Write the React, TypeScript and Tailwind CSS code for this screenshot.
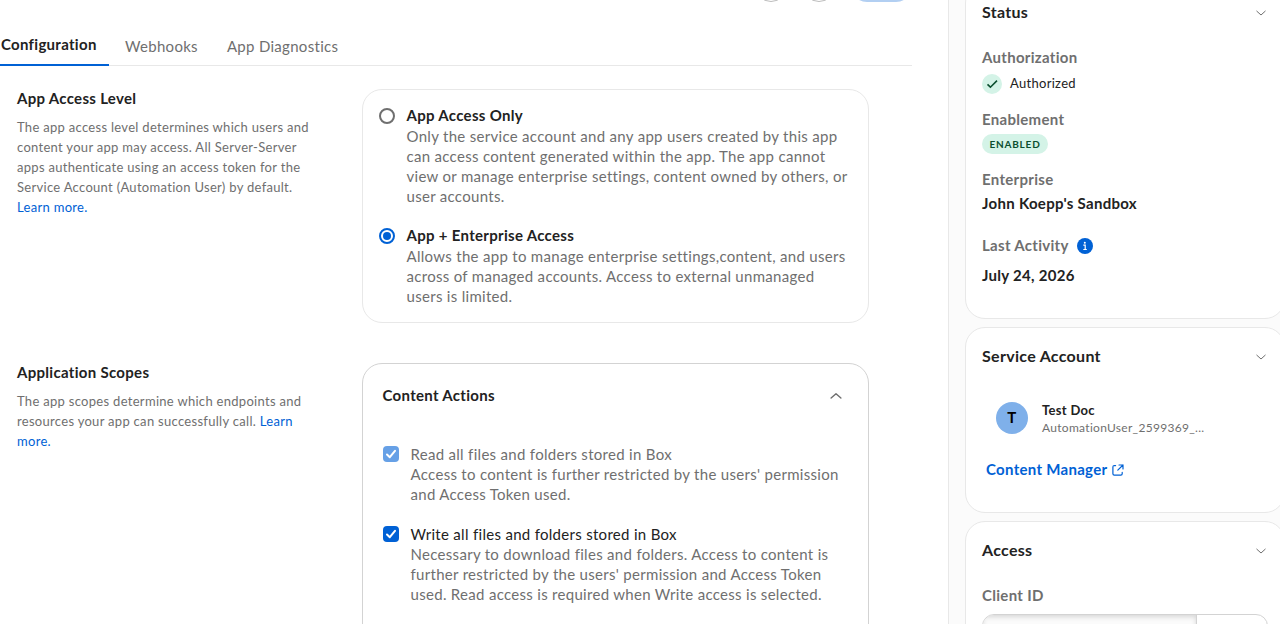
import type { ReactNode } from 'react'

const ACCESS_LEVELS = [
  {
    title: 'App Access Only',
    selected: false,
    text: 'Only the service account and any app users created by this app can access content generated within the app. The app cannot view or manage enterprise settings, content owned by others, or user accounts.',
  },
  {
    title: 'App + Enterprise Access',
    selected: true,
    text: 'Allows the app to manage enterprise settings,content, and users across of managed accounts. Access to external unmanaged users is limited.',
  },
]

const SCOPES = [
  {
    title: 'Read all files and folders stored in Box',
    disabled: true,
    text: "Access to content is further restricted by the users' permission and Access Token used.",
  },
  {
    title: 'Write all files and folders stored in Box',
    disabled: false,
    text: "Necessary to download files and folders. Access to content is further restricted by the users' permission and Access Token used. Read access is required when Write access is selected.",
  },
]

// Chevron used by the collapsible sections
function Chevron({ className = '' }: { className?: string }) {
  return (
    <svg className={className} viewBox="0 0 12 12" fill="none" stroke="currentColor" strokeLinecap="round" strokeLinejoin="round">
      <path d="M1.8 4.2 L6 8 L10.2 4.2" />
    </svg>
  )
}

// Title and help text on the left of each settings block
function SectionIntro({ title, children }: { title: string; children: ReactNode }) {
  return (
    <div className="-mt-px w-[362px] shrink-0 pl-[17px]">
      <h2 className="text-[15px] leading-5 font-bold text-[#222]">{title}</h2>
      <p className="mt-[9px] w-[300px] text-[13px] leading-5">{children}</p>
    </div>
  )
}

function SideCard({ title, className = '', children }: { title: string; className?: string; children: ReactNode }) {
  return (
    <section className={`w-[320px] shrink-0 rounded-[20px] border border-[#e8e8e8] bg-white px-4 pt-[18px] ${className}`}>
      <header className="flex h-5 items-center justify-between">
        <h3 className="text-base leading-5 font-bold text-[#222]">{title}</h3>
        <Chevron className="mt-px mr-px size-3 text-[#6f6f6f]" />
      </header>
      {children}
    </section>
  )
}

export default function App() {
  return (
    <div className="flex h-[624px] w-[1280px] overflow-hidden bg-white font-['Lato',sans-serif] tracking-[0.3px] text-[#6f6f6f]">
      <main className="w-[948px] shrink-0">
        {/* Header actions, scrolled almost out of view */}
        <div className="flex h-[2px] w-[912px] items-end justify-end gap-4 overflow-hidden">
          <div className="size-8 shrink-0 rounded-full border border-[#bcbcbc]" />
          <div className="size-8 shrink-0 rounded-full border border-[#bcbcbc]" />
          <div className="h-8 w-[61px] shrink-0 rounded-full bg-[#b2cff2]" />
        </div>

        <nav className="flex h-16 w-[912px] items-end border-b border-[#e8e8e8] text-[15px] leading-5">
          <span className="-mb-px h-8 w-[109px] border-b-2 border-[#0061d5] pl-px font-bold text-[#222]">Configuration</span>
          <span className="mb-[9px] ml-4">Webhooks</span>
          <span className="mb-[9px] ml-[29px]">App Diagnostics</span>
        </nav>

        {/* App access level */}
        <div className="mt-[23px] flex h-[234px]">
          <SectionIntro title="App Access Level">
            The app access level determines which users and content your app may access. All Server-Server apps authenticate using an access token for the Service Account (Automation User) by default.{' '}
            <a className="block text-[#0061d5]">Learn more.</a>
          </SectionIntro>
          <div className="flex w-[507px] flex-col gap-5 rounded-[20px] border border-[#e8e8e8] pt-4 pr-5 pl-4">
            {ACCESS_LEVELS.map((level) => (
              <div key={level.title} className="flex">
                <span
                  className={`mt-0.5 flex size-4 shrink-0 items-center justify-center rounded-full border-2 ${level.selected ? 'border-[#0061d5]' : 'border-[#6f6f6f]'}`}
                >
                  {level.selected && <span className="size-2 rounded-full bg-[#0061d5]" />}
                </span>
                <div className="-mt-px ml-[11.5px] text-[15px] leading-5">
                  <div className="mb-px font-bold text-[#222]">{level.title}</div>
                  <p>{level.text}</p>
                </div>
              </div>
            ))}
          </div>
        </div>

        {/* Application scopes */}
        <div className="mt-10 flex">
          <SectionIntro title="Application Scopes">
            The app scopes determine which endpoints and resources your app can successfully call. <a className="text-[#0061d5]">Learn more.</a>
          </SectionIntro>
          <div className="h-[320px] w-[507px] rounded-[20px] border border-[#d3d3d3] px-5 pt-[21px]">
            <div className="flex h-5 items-center justify-between pr-[5px]">
              <h3 className="-ml-[0.5px] text-[15px] leading-5 font-bold text-[#222]">Content Actions</h3>
              <Chevron className="mt-0.5 size-[14px] rotate-180 stroke-[1.2] text-[#6f6f6f]" />
            </div>
            <div className="mt-[39px] flex flex-col gap-5">
              {SCOPES.map((scope) => (
                <div key={scope.title} className="flex">
                  <span className={`mt-0.5 flex size-4 shrink-0 items-center justify-center rounded-[4px] ${scope.disabled ? 'bg-[#66a0e6]' : 'bg-[#0061d5]'}`}>
                    <svg className="size-4" viewBox="0 0 16 16" fill="none" stroke="white" strokeWidth="2" strokeLinecap="round" strokeLinejoin="round">
                      <path d="M4 8.5 L6.8 11.2 L12 4.8" />
                    </svg>
                  </span>
                  <div className="ml-[11.5px] w-[440px] text-[15px] leading-5">
                    <div className={scope.disabled ? '' : 'text-[#222]'}>{scope.title}</div>
                    <p>{scope.text}</p>
                  </div>
                </div>
              ))}
            </div>
          </div>
        </div>
      </main>

      <aside className="flex w-[332px] shrink-0 flex-col gap-2 border-l border-[#e8e8e8] bg-[#fbfbfb] pl-4">
        <SideCard title="Status" className="-mt-[17px] h-[336px]">
          <div className="text-[15px] leading-5 font-bold">
            <div className="mt-[25px]">Authorization</div>
            <div className="mt-[7px] flex h-5 items-center text-[13px] font-normal text-[#222]">
              <span className="mr-2 flex size-5 items-center justify-center rounded-full bg-[#d4f3e7]">
                <svg className="size-5" viewBox="0 0 20 20" fill="none" stroke="#0b4f2f" strokeWidth="1.6">
                  <path d="M5.5 10.4 L8.4 13.2 L15 6.6" />
                </svg>
              </span>
              <span className="-mt-0.5">Authorized</span>
            </div>
            <div className="mt-[15px]">Enablement</div>
            <div className="mt-[5px] flex h-5 w-[66px] items-center justify-center rounded-full bg-[#d4f3e7] text-[10px] tracking-[0.8px] text-[#0b4f2f]">ENABLED</div>
            <div className="mt-[15px]">Enterprise</div>
            <div className="mt-1 text-[#222]">John Koepp's Sandbox</div>
            <div className="mt-[22px] flex items-center">
              Last Activity
              <svg className="mt-px ml-2 size-4" viewBox="0 0 16 16">
                <circle cx="8" cy="8" r="8" fill="#0061d5" />
                <circle cx="7.8" cy="4.7" r="1" fill="white" />
                <path d="M6.3 7.2 H8.2 V11.5 M6.3 11.5 H9.8" stroke="white" strokeWidth="1.2" fill="none" />
              </svg>
            </div>
            <div className="mt-2.5 text-[#222]">July 24, 2026</div>
          </div>
        </SideCard>

        <SideCard title="Service Account" className="h-[186px]">
          <div className="mt-[35px] flex items-start pl-[14px]">
            <div className="mt-px flex size-8 items-center justify-center rounded-full bg-[#7fb0ea] pb-px text-[15px] font-bold text-black">T</div>
            <div className="ml-[14px]">
              <div className="mb-px text-[13px] leading-[18px] font-bold text-[#222]">Test Doc</div>
              <div className="text-xs leading-4">AutomationUser_2599369_...</div>
            </div>
          </div>
          <a className="mt-[23px] flex items-center pl-1 text-[15px] leading-5 font-bold text-[#0061d5]">
            Content Manager
            <svg className="mt-px ml-[5px] size-3" viewBox="0 0 12 12" fill="none" stroke="currentColor" strokeWidth="1.2" strokeLinecap="round" strokeLinejoin="round">
              <path d="M3.6 1.6 H2.3 Q0.9 1.6 0.9 3 V9.8 Q0.9 11.2 2.3 11.2 H8.8 Q10.2 11.2 10.2 9.8 V8.4" />
              <path d="M7 1 H11 V5 M11 1 L5.8 6.2" />
            </svg>
          </a>
        </SideCard>

        <SideCard title="Access" className="h-[200px]">
          <div className="mt-[25px] text-[15px] leading-5 font-bold">Client ID</div>
          <div className="mt-[9px] flex h-10 w-[286px] overflow-hidden rounded-xl border border-[#d3d3d3]">
            <div className="w-[214px] border-r border-[#d3d3d3] bg-[#fbfbfb] shadow-[inset_0_2px_5px_rgba(0,0,0,0.15)]" />
          </div>
        </SideCard>
      </aside>
    </div>
  )
}
